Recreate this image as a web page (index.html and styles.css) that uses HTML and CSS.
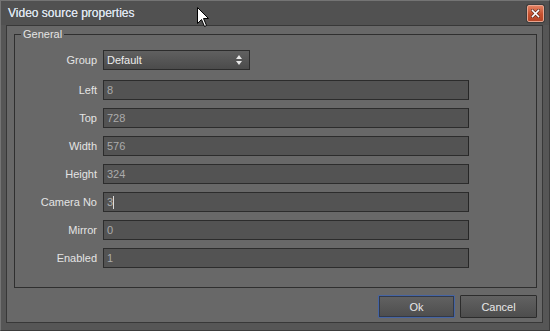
FILE: index.html
```html
<!DOCTYPE html>
<html lang="en">
<head>
    <meta charset="UTF-8">
    <meta name="viewport" content="width=device-width, initial-scale=1.0">
    <title>Video source properties</title>
    <link rel="stylesheet" href="styles.css">
</head>
<body>
    <div class="window">
        <div class="titlebar">
            <span class="title">Video source properties</span>
            <button class="close-btn" title="Close">
                <svg width="9" height="9" viewBox="0 0 9 9">
                    <path d="M1.5 1.5 L7.5 7.5 M7.5 1.5 L1.5 7.5" stroke="#5a2a1a" stroke-width="3" stroke-linecap="square"/>
                    <path d="M1.5 1.5 L7.5 7.5 M7.5 1.5 L1.5 7.5" stroke="#ffffff" stroke-width="1.6" stroke-linecap="square"/>
                </svg>
            </button>
        </div>

        <div class="panel">
            <fieldset class="group">
                <legend>General</legend>
                <div class="form">
                    <label>Group</label>
                    <div class="combo">
                        <span>Default</span>
                        <svg class="combo-arrows" width="6" height="10" viewBox="0 0 6 10">
                            <path d="M3 0 L6 4 L0 4 Z" fill="#e8e8e8"/>
                            <path d="M0 6 L6 6 L3 10 Z" fill="#e8e8e8"/>
                        </svg>
                    </div>

                    <label>Left</label>
                    <div class="field">8</div>

                    <label>Top</label>
                    <div class="field">728</div>

                    <label>Width</label>
                    <div class="field">576</div>

                    <label>Height</label>
                    <div class="field">324</div>

                    <label>Camera No</label>
                    <div class="field">3<span class="caret"></span></div>

                    <label>Mirror</label>
                    <div class="field">0</div>

                    <label>Enabled</label>
                    <div class="field">1</div>
                </div>
            </fieldset>

            <div class="actions">
                <button class="btn btn-default">Ok</button>
                <button class="btn">Cancel</button>
            </div>
        </div>

        <!-- mouse pointer visible in the capture -->
        <svg class="pointer" width="13" height="21" viewBox="0 0 13 21">
            <path d="M0.5 0.5 L0.5 16.5 L4.5 12.5 L7.5 19.5 L9.5 18.5 L6.5 11.5 L11.5 11.5 Z" fill="#ffffff" stroke="#000000" stroke-width="1"/>
        </svg>
    </div>
</body>
</html>
```

FILE: styles.css
```css
body {
    margin: 0;
    background-color: #545454;
    font-family: "Liberation Sans", Arial, sans-serif;
}
.window {
    position: relative;
    width: 550px;
    height: 331px;
    box-sizing: border-box;
    background: #565656;
    border: 1px solid #747474;
    border-bottom-color: #3c3c3c;
    border-right-color: #3c3c3c;
}
.titlebar {
    height: 24px;
    display: flex;
    align-items: center;
    justify-content: space-between;
    padding: 0 5px 0 7px;
    background: #515151;
}
.title {
    color: #dde3ee;
    font-size: 12px;
    text-shadow: 0 0 0.4px #dde3ee;
}
.close-btn {
    width: 17px;
    height: 17px;
    padding: 0;
    display: flex;
    align-items: center;
    justify-content: center;
    border: 1px solid #e8a690;
    border-radius: 2px;
    background: linear-gradient(#e27f60, #c4502e 55%, #b54526);
    box-shadow: 0 0 0 1px #3d3d3d;
}
.panel {
    height: 298px;
    box-sizing: border-box;
    margin: 0 6px 0 5px;
    padding: 0 5px 0 7px;
    background: #686868;
    border: 1px solid #383838;
}
.group {
    margin: 2px 0 0;
    padding: 9px 0 19px;
    min-width: 0;
    border: 1px solid #2f2f2f;
}
.group legend {
    margin-left: 6px;
    padding: 0 2px;
    font-size: 11px;
    line-height: 13px;
    color: #e4e4e4;
}
.form {
    display: grid;
    grid-template-columns: 82px 366px;
    grid-template-rows: 22px repeat(7, 20px);
    column-gap: 6px;
    row-gap: 8px;
    align-items: start;
}
.form label {
    text-align: right;
    font-size: 11px;
    line-height: 20px;
    color: #e4e4e4;
}
.combo {
    width: 147px;
    height: 20px;
    box-sizing: border-box;
    display: flex;
    align-items: center;
    justify-content: space-between;
    padding: 0 7px 0 3px;
    border: 1px solid #2c2c2c;
    background: linear-gradient(#606060, #4b4b4b);
    color: #ececec;
    font-size: 11px;
}
.field {
    height: 20px;
    box-sizing: border-box;
    padding-left: 3px;
    border: 1px solid #2c2c2c;
    border-right-color: #262626;
    background: #535353;
    color: #ababab;
    font-size: 11px;
    line-height: 18px;
}
.caret {
    display: inline-block;
    width: 1px;
    height: 13px;
    margin-left: 0;
    vertical-align: -3px;
    background: #dcdcdc;
}
.actions {
    display: flex;
    justify-content: flex-end;
    gap: 5px;
    margin-top: 7px;
}
.btn {
    width: 77px;
    height: 23px;
    padding: 0;
    border: 1px solid #2c2c2c;
    border-radius: 1px;
    background: linear-gradient(#626262, #4d4d4d);
    color: #e8e8e8;
    font-family: "Liberation Sans", Arial, sans-serif;
    font-size: 11px;
}
.btn-default {
    border-color: #4564a4;
    box-shadow: inset 0 0 0 1px #333a48;
}
.pointer {
    position: absolute;
    left: 196px;
    top: 6px;
}
```
